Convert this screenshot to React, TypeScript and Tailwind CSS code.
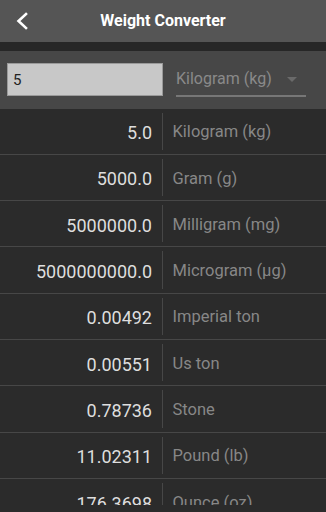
import React from "react";

const rows: [string, string][] = [
  ["5.0", "Kilogram (kg)"],
  ["5000.0", "Gram (g)"],
  ["5000000.0", "Milligram (mg)"],
  ["5000000000.0", "Microgram (µg)"],
  ["0.00492", "Imperial ton"],
  ["0.00551", "Us ton"],
  ["0.78736", "Stone"],
  ["11.02311", "Pound (lb)"],
  ["176.3698", "Ounce (oz)"],
];

export default function App() {
  return (
    <div className="w-[326px] h-[512px] bg-[#2b2b2b] flex flex-col overflow-hidden font-['Roboto',sans-serif]">
      <header className="h-[42px] shrink-0 bg-[#555555] grid grid-cols-[48px_1fr_48px] items-center">
        <div className="flex items-center pl-[15px]">
          <svg width="14" height="18" viewBox="0 0 14 18" fill="none">
            <path d="M11 2 L3.5 9 L11 16" stroke="#ffffff" strokeWidth="2.6" strokeLinecap="square" strokeLinejoin="miter" />
          </svg>
        </div>
        <h1 className="text-center text-white font-bold text-[16px] leading-none">Weight Converter</h1>
        <div />
      </header>
      <div className="h-[9px] shrink-0 bg-[#272727]" />
      <div className="h-[57.5px] shrink-0 bg-[#474747] flex items-center pl-[7px]">
        <div className="w-[156px] h-[33px] bg-[#c8c8c8] border border-[#9a9a9a] flex items-center pl-[5px] text-[15px] text-[#222222]">
          5
        </div>
        <div className="ml-[13px] w-[130px] h-[33px] flex items-center justify-between border-b-2 border-[#777777] mt-[1px]">
          <span className="text-[16px] text-[#8a8a8a]">Kilogram (kg)</span>
          <svg width="10" height="5" viewBox="0 0 10 5" className="mr-[9px]">
            <path d="M0 0 L10 0 L5 5 Z" fill="#6a6a6a" />
          </svg>
        </div>
      </div>
      <div className="h-[396.5px] shrink-0 overflow-hidden">
        {rows.map(([v, u]) => (
          <div key={u} className="h-[46.3px] flex items-stretch border-b border-[#474747]">
            <div className="w-[162px] flex items-center justify-end pr-[10px] pt-[3px] text-[18px] text-[#dedede]">{v}</div>
            <div className="w-px bg-[#474747] my-[4px]" />
            <div className="flex-1 flex items-center pl-[9.5px] pt-[3px] text-[16.5px] text-[#878787]">{u}</div>
          </div>
        ))}
      </div>
    </div>
  );
}
